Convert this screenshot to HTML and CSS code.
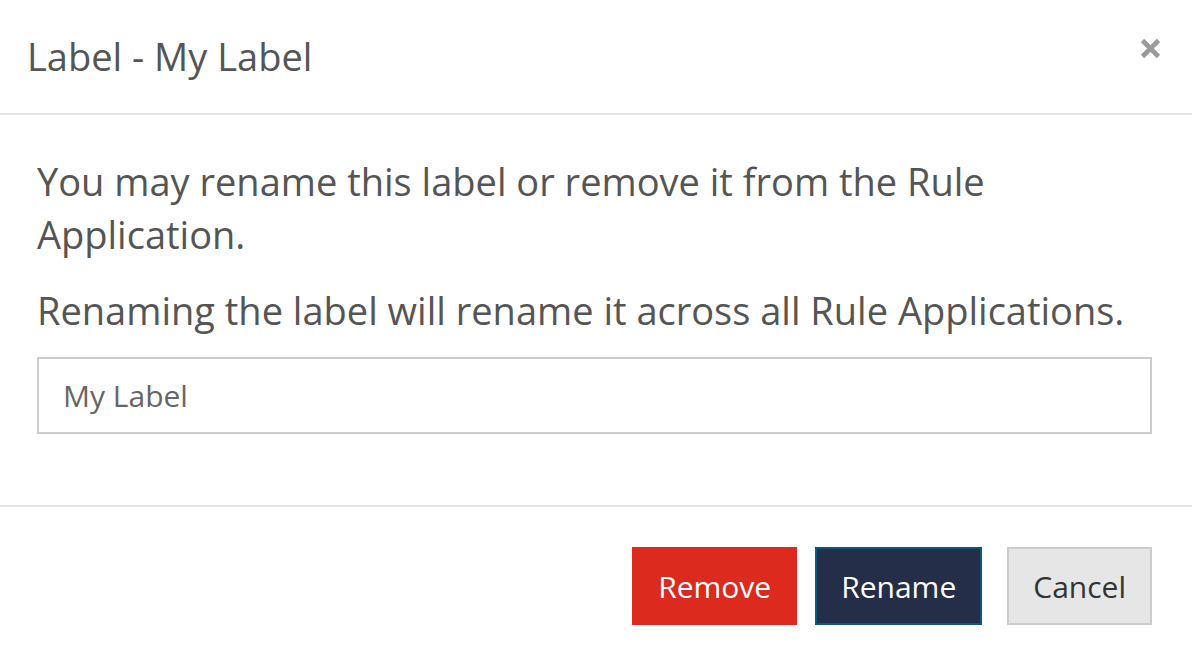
FILE: index.html
```html
<!DOCTYPE html>
<html>
<head>
<meta charset="utf-8">
<link rel="stylesheet" href="styles.css">
</head>
<body>
<div class="modal">
  <div class="modal-header">
    <h4 class="modal-title">Label - My Label</h4>
    <button class="close" aria-label="Close">
      <svg width="23" height="23" viewBox="0 0 23 23"><path d="M3.5 3.5 L19.5 19.5 M19.5 3.5 L3.5 19.5" stroke="#9a9a9a" stroke-width="4.6" stroke-linecap="butt"/></svg>
    </button>
  </div>
  <div class="modal-body">
    <p>You may rename this label or remove it from the Rule Application.</p>
    <p class="last">Renaming the label will rename it across all Rule Applications.</p>
    <input class="form-control" type="text" value="My Label">
  </div>
  <div class="modal-footer">
    <button class="btn btn-danger">Remove</button>
    <button class="btn btn-primary">Rename</button>
    <button class="btn btn-default">Cancel</button>
  </div>
</div>
</body>
</html>
```
FILE: styles.css
```css
* { box-sizing: border-box; }
html, body { margin: 0; padding: 0; background: #fff; }
body { font-family: "Open Sans", "Liberation Sans", sans-serif; color: #555; }
.modal { width: 1192px; height: 664px; }
.modal-header {
  height: 115px;
  display: flex;
  align-items: center;
  justify-content: space-between;
  padding: 0 30px 0 27px;
  border-bottom: 2px solid #e5e5e5;
}
.modal-title { margin: 0; font-weight: 400; font-size: 38px; line-height: 52px; color: #555; position: relative; top: -1px; }
.close { background: none; border: 0; padding: 0; width: 23px; height: 23px; display: flex; position: relative; top: -8px; }
.modal-body { padding: 40px 40px 71px 37px; border-bottom: 2px solid #e5e5e5; }
.modal-body p { margin: 0 0 23px; font-size: 38px; line-height: 53px; color: #555; }
.modal-body p.last { margin-bottom: 20px; }
.form-control {
  display: block;
  margin: 0;
  width: 100%;
  height: 77px;
  border: 2px solid #ccc;
  padding: 0 24px;
  font-family: inherit;
  font-size: 30px;
  color: #666;
  outline: none;
}
.modal-footer {
  display: flex;
  justify-content: flex-end;
  gap: 18px;
  padding: 40px 40px 0 0;
}
.btn {
  height: 78px;
  font-family: inherit;
  font-size: 30px;
  padding: 0 24px;
  border: 2px solid transparent;
}
.btn-danger { background: #dd2a1e; border-color: #dd2a1e; color: #fff; }
.btn-primary { background: #252e48; border-color: #0b5a7a; color: #fff; }
.btn-default { background: #e6e6e6; border-color: #ccc; color: #333; margin-left: 7px; }
```
